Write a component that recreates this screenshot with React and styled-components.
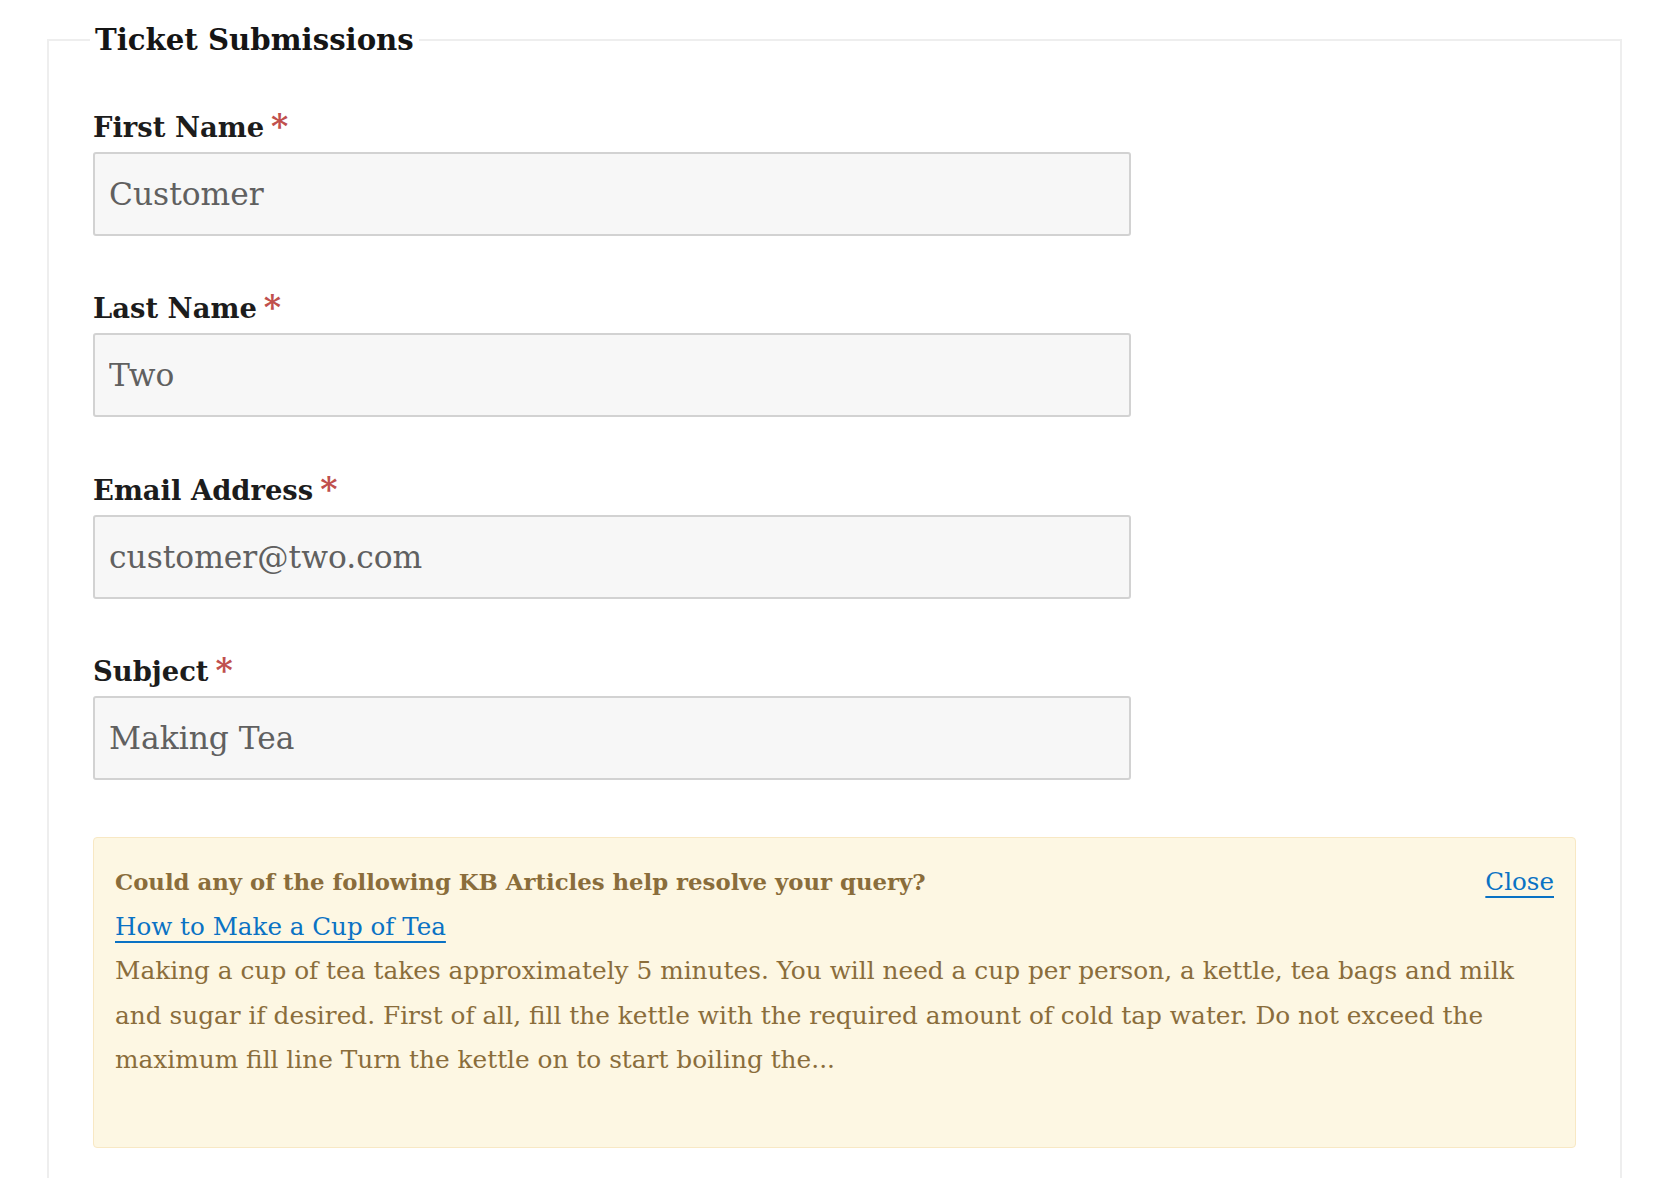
import React from "react";
import styled, { createGlobalStyle } from "styled-components";

const Global = createGlobalStyle`
  html, body { margin: 0; padding: 0; background: #fff; }
  body { font-family: "DejaVu Serif", "Liberation Serif", serif; color: #1e1e1e; }
  * { box-sizing: border-box; }
`;

const Page = styled.div`
  padding: 20px 46px 0 47px;
`;

const Fieldset = styled.fieldset`
  margin: 0;
  border: 2px solid #eeeeee;
  border-bottom: none;
  padding: 0 44px 30px 44px;
  min-width: 0;
`;

const Legend = styled.legend`
  font-size: 29.2px;
  font-weight: 700;
  line-height: 40px;
  padding: 0 5px;
  margin-left: -3px;
  color: #151515;
`;

const Group = styled.div`
  margin-top: ${(p) => (p.$first ? "46.5px" : "0")};
  margin-bottom: 52.5px;
`;

const Label = styled.label`
  display: block;
  font-size: 27.4px;
  font-weight: 700;
  line-height: 40px;
  margin-bottom: 5px;
  color: #1c1c1c;
`;

const Req = styled.span`
  color: #c0504d;
  margin-left: 7px;
  font-size: 33px;
  line-height: 0;
  vertical-align: -1px;
`;

const Input = styled.input`
  display: block;
  width: 1038px;
  height: 84px;
  padding: 0 14px;
  border: 2px solid #d2d2d2;
  border-radius: 3px;
  background: #f7f7f7;
  font-family: "DejaVu Serif", "Liberation Serif", serif;
  font-size: 31.3px;
  color: #606060;
  outline: none;
`;

const Notice = styled.div`
  margin-top: 57px;
  background: #fdf7e3;
  border: 1px solid #f8e8c4;
  border-radius: 4px;
  padding: 22px 21px 64px 21px;
  color: #8a6d3b;
  font-size: 24.8px;
  line-height: 44.5px;
`;

const NoticeHead = styled.div`
  display: flex;
  justify-content: space-between;
  align-items: baseline;
`;

const NoticeTitle = styled.strong`
  font-weight: 700;
  font-size: 22.8px;
`;

const Link = styled.a`
  color: #0a72c4;
  font-size: 24.6px;
  text-decoration: underline;
  text-decoration-thickness: 2px;
  text-underline-offset: 6px;
  cursor: pointer;
`;

const Article = styled.div``;

const fields = [
  { label: "First Name", value: "Customer" },
  { label: "Last Name", value: "Two" },
  { label: "Email Address", value: "customer@two.com" },
  { label: "Subject", value: "Making Tea" },
];

export default function App() {
  return (
    <>
      <Global />
      <Page>
        <Fieldset>
          <Legend>Ticket Submissions</Legend>
          {fields.map((f, i) => (
            <Group key={f.label} $first={i === 0}>
              <Label>
                {f.label}
                <Req>*</Req>
              </Label>
              <Input defaultValue={f.value} />
            </Group>
          ))}
          <Notice>
            <NoticeHead>
              <NoticeTitle>Could any of the following KB Articles help resolve your query?</NoticeTitle>
              <Link>Close</Link>
            </NoticeHead>
            <Article>
              <Link>How to Make a Cup of Tea</Link>
            </Article>
            <Article>
              Making a cup of tea takes approximately 5 minutes. You will need a cup per person, a kettle, tea bags and milk and sugar if desired. First of all, fill the kettle with the required amount of cold tap water. Do not exceed the maximum fill line Turn the kettle on to start boiling the...
            </Article>
          </Notice>
        </Fieldset>
      </Page>
    </>
  );
}
